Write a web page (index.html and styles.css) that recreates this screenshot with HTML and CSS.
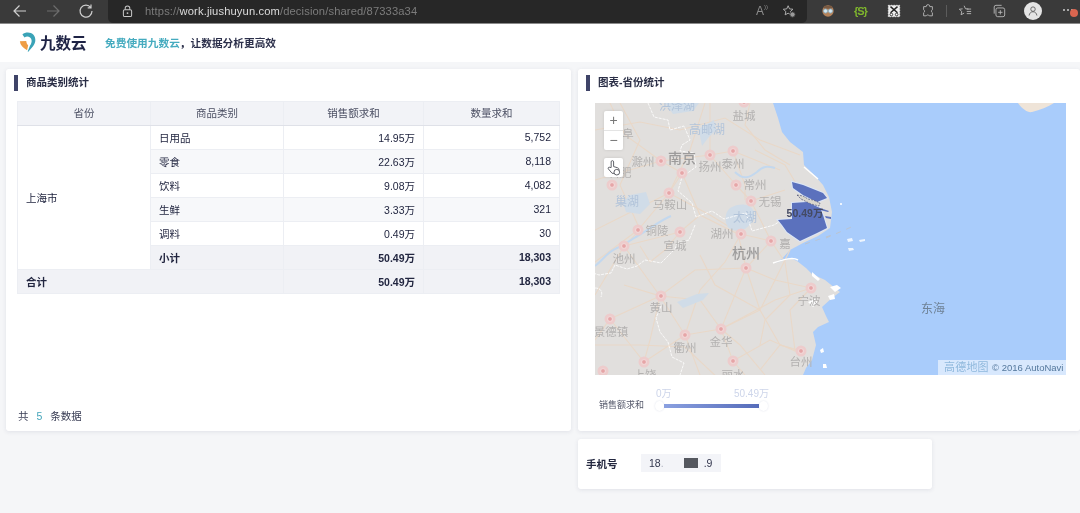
FILE: index.html
```html
<!DOCTYPE html>
<html lang="zh-CN">
<head>
<meta charset="utf-8">
<title>九数云</title>
<link rel="stylesheet" href="styles.css">
</head>
<body>
<div class="browser">
  <div class="nav-icons">
    <svg class="ic ic-back" viewBox="0 0 16 16"><path d="M14 8H2M7.500 2.500 2 8l5.500 5.500"/></svg>
    <svg class="ic ic-fwd" viewBox="0 0 16 16"><path d="M2 8h12M8.500 2.500 14 8l-5.500 5.500"/></svg>
    <svg class="ic ic-reload" viewBox="0 0 16 16"><path d="M12.800 4.500A6 6 0 1 0 14 8M13 1.500v3.300H9.700"/></svg>
  </div>
  <div class="urlbar">
    <svg class="lock" viewBox="0 0 12 14"><rect x="1.500" y="5" width="9" height="7.500" rx="1.500"/><path d="M3.500 5V3.500a2.500 2.500 0 0 1 5 0V5"/><circle class="lock-dot" cx="6" cy="8.700" r="1"/></svg>
    <span class="url"><span class="url-dim">https://</span><span class="url-host">work.jiushuyun.com</span><span class="url-dim">/decision/shared/87333a34</span></span>
    <span class="url-tools">
      <span class="read">A<sup>))</sup></span>
      <svg class="tb" viewBox="0 0 16 16"><path d="M7 2l1.600 3.600 3.900.4-2.900 2.600.8 3.800L7 10.500l-3.400 1.900.8-3.800L1.500 6l3.900-.4z"/><circle class="fill-grey" cx="12" cy="12" r="3"/></svg>
    </span>
  </div>
  <div class="ext">
    <svg class="tb tb-face" viewBox="0 0 16 16"><circle class="face" cx="8" cy="8" r="6.500"/><rect class="hair" x="3" y="2" width="10" height="3.500" rx="1.700"/><circle class="eye" cx="5.200" cy="8" r="2.300"/><circle class="eye" cx="10.800" cy="8" r="2.300"/></svg>
    <span class="ext-s">{S}</span>
    <svg class="tb tb-x" viewBox="0 0 16 16"><rect class="x-bg" x="1.500" y="1.500" width="13" height="13"/><path class="x-line" d="M4 3l8 7M12 3l-8 7"/><circle class="x-c" cx="5" cy="12" r="1.500"/><circle class="x-c" cx="11" cy="12" r="1.500"/></svg>
    <svg class="tb tb-puzzle" viewBox="0 0 16 16"><path d="M6 2.500a2 2 0 0 1 4 .5h3v3.500a2 2 0 0 0 0 3.500V13.500H9.500a2 2 0 0 0-3.500 0H3V10a2 2 0 0 0 0-3.500V3h3z"/></svg>
    <span class="sep"></span>
    <svg class="tb tb-fav" viewBox="0 0 16 16"><path d="M7 2l1.500 3.400 3.500.4M5.300 5.500 1.500 6l2.800 2.500-.8 3.800L7 10.400M10 8.500h5M10 11h5M10 5.800h5"/></svg>
    <svg class="tb tb-coll" viewBox="0 0 16 16"><rect x="4.500" y="4.500" width="10" height="10" rx="2"/><path d="M2.500 11V3.500a2 2 0 0 1 2-2H11M9.500 7v5M7 9.500h5"/></svg>
    <span class="avatar"><svg viewBox="0 0 16 16"><circle cx="8" cy="5.500" r="3"/><path d="M2.800 14c.5-3.200 2.500-5 5.200-5s4.700 1.800 5.200 5"/></svg></span>
    <span class="more"><span class="dots"><i></i><i></i><i></i></span><span class="badge"></span></span>
  </div>
</div>

<header class="site-head">
  <svg class="logo" viewBox="0 0 20 24">
    <path class="logo-t" d="M4 2.500C7.500-.5 14-.5 17 3c3.500 4.500 2.500 9.500-.5 13.500L11 23l-.8-.4 2.800-7C15.500 12 15.500 8 13 6 11 4.500 8.500 4.500 6.500 6z"/>
    <path class="logo-o" d="M1 10.500l7.500-.3c.2 2 1 3.800 2.300 5L9.500 21C4.500 18 1.500 15 1 10.500z"/>
  </svg>
  <span class="brand">九数云</span>
  <span class="slogan"><span class="slogan-a">免费使用九数云</span>，让数据分析更高效</span>
</header>

<main class="board">
  <section class="card card-table">
    <h2 class="card-title">商品类别统计</h2>
    <table class="data">
      <colgroup><col class="c1"><col class="c2"><col class="c3"><col class="c4"></colgroup>
      <thead><tr><th>省份</th><th>商品类别</th><th>销售额求和</th><th>数量求和</th></tr></thead>
      <tbody>
        <tr><td rowspan="6" class="prov">上海市</td><td>日用品</td><td class="n">14.95万</td><td class="n">5,752</td></tr>
        <tr class="alt"><td>零食</td><td class="n">22.63万</td><td class="n">8,118</td></tr>
        <tr><td>饮料</td><td class="n">9.08万</td><td class="n">4,082</td></tr>
        <tr class="alt"><td>生鲜</td><td class="n">3.33万</td><td class="n">321</td></tr>
        <tr><td>调料</td><td class="n">0.49万</td><td class="n">30</td></tr>
        <tr class="sub"><td>小计</td><td class="n">50.49万</td><td class="n">18,303</td></tr>
        <tr class="sub"><td colspan="2">合计</td><td class="n">50.49万</td><td class="n">18,303</td></tr>
      </tbody>
    </table>
    <p class="count">共<span class="count-n">5</span>条数据</p>
  </section>

  <section class="card card-map">
    <h2 class="card-title">图表-省份统计</h2>
    <div class="map">
      <svg class="map-svg" viewBox="595 103 471 272" preserveAspectRatio="none">
        <defs>
          <g id="d"><circle class="d1" r="5.500"/><circle class="d2" r="2.400"/></g>
        </defs>
        <rect class="land" x="595" y="103" width="471" height="272"/>
        <path class="sea" d="M773 103L778 118 782 132 790 142 803 152 804 165 815 176 823 185 829 197 832 212 830 228 818 236 803 243 790 250 779 262 773 264 790 258 797 261 806 268 812 274 825 280 840 292 832 298 822 307 826 316 829 322 818 327 813 332 816 345 812 360 806 368 803 375H1066V103z"/>
        <path class="sea-cap" d="M1018 103c4 6 10 10 14 9 8-2 16-5 22-9z"/>
        <g class="roads">
          <path d="M595 130L640 122 680 130 725 118 760 140 800 155"/>
          <path d="M620 103L640 140 620 185 640 230 624 246 660 296 685 335 700 375"/>
          <path d="M595 180L661 161 710 155 733 151 780 170"/>
          <path d="M682 173L700 215 738 234 746 268 721 329 733 361 745 375"/>
          <path d="M661 161L682 173 669 193 638 230 595 262"/>
          <path d="M710 103L710 155 736 185 751 201 771 241 746 268"/>
          <path d="M746 268L695 270 660 296 610 319 595 340"/>
          <path d="M746 268L775 280 811 288 790 310 795 351 801 351"/>
          <path d="M746 268L760 310 780 345 801 351"/>
          <path d="M721 329L775 300 811 288"/>
          <path d="M685 335L721 329 760 310"/>
          <path d="M610 319L644 362 685 335"/>
          <path d="M595 345L640 345 685 347 720 380"/>
          <path d="M669 193L710 215 741 234 771 241"/>
          <path d="M624 246L680 232 700 215"/>
          <path d="M733 151L745 185 745 200"/>
          <path d="M660 296L700 300 721 329 740 345 765 375"/>
          <path d="M775 280L790 250"/>
          <path d="M750 103L745 125 765 150 790 165"/>
          <path d="M610 103L625 135 661 161"/>
          <path d="M595 230L625 215 669 193 690 150 705 103"/>
          <path d="M640 246L650 262 665 250 680 232"/>
          <path d="M595 295L624 246M624 285L660 296 650 340 644 362"/>
          <path d="M700 255L715 285 760 310 775 280"/>
          <path d="M741 234L725 262 700 290 685 335"/>
          <path d="M771 241L785 262 790 295 765 320 760 345"/>
          <path d="M801 351L780 345 760 370"/>
          <path d="M733 361L770 340 795 351"/>
          <path d="M755 150L785 165 800 190M751 201L785 190"/>
        </g>
        <g class="lakes">
          <path d="M630 195l16-3 4 12-10 10-14-2-3-10z"/>
          <path d="M730 208c10-6 20-4 23 2 3 8-2 16-10 20-8 2-16 0-17-8-1-6 0-10 4-14z"/>
          <path d="M700 128l14-8 2 10-8 8-6 8-2-10z"/>
          <path d="M665 103h34l-6 8-20 3z"/>
          <path d="M677 302l20-8 12-1-6 7-20 8z"/>
          <path class="river" d="M595 266c8-6 12-14 22-18 8-3 16-10 24-14 10-6 20-14 30-18"/>
          <path class="river" d="M735 172c8 8 14 6 22 0 6-6 10-6 18-4"/>
        </g>
        <g class="borders">
          <path d="M648 103l6 14 14 3 2 10 14-4 6 14-8 5-2 6 14 2 2 14-14 10-4 14 14 12 4 14 16-6 12 8 22-6 6 18 22-6 8-5 4 8"/>
          <path d="M695 225l-6 15-12 3-2 6-14 14-16-3-8 6-10 3-12-4-4 8-12 2-6-2"/>
          <path d="M661 306l-5 12 4 14 8 10 4 15 12 6-4 12"/>
          <path d="M595 288c6 0 8 4 6 9"/>
        </g>
        <path class="shore" d="M773 263c12-4 20-6 25-3M804 167l14 12"/>
        <g class="isles">
          <path d="M830 287l7-2 4 3-6 4zM812 272l8 7-2 2-6-5zM828 296l6-2 1 5-5 1zM808 302l7-3 3 4-5 4z"/>
          <path d="M820 350l3-2 1 4-3 1zM823 364l3 0 1 4-4 0z"/>
        </g>
        <g class="isles-w">
          <path d="M847 239l5-1 1 3-5 1zM859 240l6-1 0 2-5 1zM840 203l2 0 0 2-2 0zM848 248l5 0 1 2-5 1z"/>
        </g>
        <path class="lanes" d="M805 244l30-10M826 238l30-13"/>
        <use href="#d" x="744" y="102"/><use href="#d" x="661" y="161"/><use href="#d" x="682" y="173"/>
        <use href="#d" x="710" y="155"/><use href="#d" x="733" y="151"/><use href="#d" x="736" y="185"/>
        <use href="#d" x="751" y="201"/><use href="#d" x="669" y="193"/><use href="#d" x="612" y="185"/>
        <use href="#d" x="638" y="230"/><use href="#d" x="680" y="232"/><use href="#d" x="741" y="234"/>
        <use href="#d" x="771" y="241"/><use href="#d" x="746" y="268"/><use href="#d" x="624" y="246"/>
        <use href="#d" x="811" y="288"/><use href="#d" x="661" y="296"/><use href="#d" x="610" y="319"/>
        <use href="#d" x="685" y="335"/><use href="#d" x="721" y="329"/><use href="#d" x="733" y="361"/>
        <use href="#d" x="644" y="362"/><use href="#d" x="603" y="371"/><use href="#d" x="801" y="351"/>
        <g class="city">
          <text x="744" y="120">盐城</text><text x="643" y="166">滁州</text><text x="710" y="171">扬州</text>
          <text x="733" y="168">泰州</text><text x="755" y="189">常州</text><text x="770" y="206">无锡</text>
          <text x="670" y="209">马鞍山</text><text x="657" y="235">铜陵</text><text x="722" y="238">湖州</text>
          <text x="675" y="250">宣城</text><text x="785" y="248">嘉</text><text x="624" y="263">池州</text>
          <text x="809" y="305">宁波</text><text x="661" y="312">黄山</text><text x="611" y="336">景德镇</text>
          <text x="685" y="352">衢州</text><text x="721" y="346">金华</text><text x="733" y="379">丽水</text>
          <text x="645" y="379">上饶</text><text x="801" y="366">台州</text><text x="620" y="177">合肥</text>
          <text x="628" y="138">阜</text>
        </g>
        <g class="city-big"><text x="682" y="163">南京</text><text x="746" y="258">杭州</text></g>
        <g class="water"><text x="677" y="110">洪泽湖</text><text x="707" y="134">高邮湖</text><text x="627" y="206">巢湖</text><text x="745" y="222">太湖</text></g>
        <text class="sea-name" x="933" y="313">东海</text>
        <path class="sh-outline" d="M792 182l11 3 20 8 4 5-10 4-14-7-10-7zM792 203l15-1 13 6 3 7 4 13-10 5-17 8-13-9-5-7-4-5 14-1z"/>
        <path class="sh" d="M792 182l11 3 20 8 4 5-10 4-14-7-10-7zM792 203l15-1 13 6 3 7 4 13-10 5-17 8-13-9-5-7-4-5 14-1zM820 208l9 3-1 1-8-2zM825 216l6 1 0 2-5-1z"/>
        <path class="sh-isle" d="M797 195l6 1 5 3 5 1 7 3-1 3-8-2-6-3-4-2z"/>
        <text class="val" x="805" y="217">50.49万</text>
      </svg>
      <div class="zoom"><span class="zoom-b">+</span><span class="zoom-b">−</span></div>
      <div class="hand">
        <svg viewBox="0 0 16 18"><path d="M5.500 9V3a1.300 1.300 0 0 1 2.600 0v5l4 1.200c1.300.4 1.900 1.200 1.700 2.500l-.6 3.500H6.500L2.500 10.500c-.9-1.200.7-2.500 1.800-1.500z"/><circle class="hand-c" cx="11.500" cy="14" r="3"/></svg>
      </div>
      <div class="attrib"><span class="attrib-l">高德地图</span><span class="attrib-c">© 2016 AutoNavi</span></div>
    </div>
    <div class="legend">
      <span class="legend-name">销售额求和</span>
      <div class="range">
        <div class="range-labels"><span>0万</span><span>50.49万</span></div>
        <div class="range-track"><span class="knob"></span><span class="bar"></span><span class="knob"></span></div>
      </div>
    </div>
  </section>

  <section class="card card-form">
    <span class="form-label">手机号</span>
    <span class="phone"><span>18</span><span class="ph-w">.</span><span class="ph-k"></span><span class="ph-end">.9</span></span>
  </section>
</main>
</body>
</html>
```
FILE: styles.css
```css
* { box-sizing: border-box; }
html, body { margin: 0; padding: 0; }
body {
  width: 1080px;
  height: 513px;
  overflow: hidden;
  background: #f5f6f8;
  font-family: "Liberation Sans", "Noto Sans CJK SC", sans-serif;
  font-size: 10.500px;
  color: #222640;
}
.browser, .site-head, .board { filter: blur(.3px); }

/* browser chrome */
.browser {
  height: 24px;
  background: #3a3a3a;
  border-bottom: 1px solid #8a8a8a;
  display: flex;
  align-items: stretch;
  color: #ccc;
}
.nav-icons {
  width: 108px;
  flex: none;
  display: flex;
  align-items: center;
  padding: 0 0 1px 12px;
  gap: 17px;
}
.ic { width: 16px; height: 16px; fill: none; stroke: #cfcfcf; stroke-width: 1.200; flex: none; }
.ic-fwd { stroke: #6d6d6d; }
.urlbar {
  width: 699px;
  flex: none;
  background: #272727;
  border-radius: 0 0 5px 5px;
  display: flex;
  align-items: center;
  padding: 0 0 1px 14px;
}
.lock { width: 11px; height: 13px; fill: none; stroke: #c9c9c9; stroke-width: 1.100; flex: none; }
.lock-dot { fill: #c9c9c9; stroke: none; }
.url { margin-left: 12px; font-size: 11.200px; letter-spacing: .12px; white-space: nowrap; }
.url-dim { color: #7c7c7c; }
.url-host { color: #dcdcdc; }
.url-tools { margin-left: auto; display: flex; align-items: center; gap: 14px; padding-right: 11px; }
.read { color: #8d8d8d; font-size: 12px; line-height: 14px; }
.read sup { font-size: 6px; vertical-align: 6px; line-height: 0; }
.tb { width: 14px; height: 14px; fill: none; stroke: #bdbdbd; stroke-width: 1; flex: none; }
.fill-grey { fill: #9a9a9a; stroke: #3a3a3a; }
.ext { flex: 1; display: flex; align-items: center; padding: 0 0 1px 14px; position: relative; }
.tb-face { margin-right: 19px; }
.face { fill: #b5835a; stroke: none; }
.hair { fill: #7a5a42; stroke: none; }
.eye { fill: #d8eaf2; stroke: #8fb4c8; }
.ext-s { width: 14px; color: #7fb62d; font-size: 11px; font-weight: bold; margin-right: 19px; letter-spacing: -1px; }
.tb-x { margin-right: 20px; }
.x-bg { fill: #eee; stroke: #eee; stroke-dasharray: 1.500 1.500; }
.x-line { stroke: #222; stroke-width: 1.600; }
.x-c { fill: #fff; stroke: #222; }
.tb-puzzle { margin-right: 11px; }
.sep { width: 1px; height: 12px; background: #5c5c5c; margin-right: 11px; flex: none; }
.tb-fav { margin-right: 20px; }
.tb-coll { margin-right: 18px; }
.avatar {
  width: 18px; height: 18px; border-radius: 50%;
  background: #e4e4e4; display: flex; align-items: center; justify-content: center;
  flex: none; margin-right: 21px;
}
.avatar svg { width: 12px; height: 12px; fill: none; stroke: #555; stroke-width: 1.100; }
.more { position: relative; width: 16px; height: 12px; flex: none; }
.dots { display: flex; gap: 2px; padding-top: 4px; }
.dots i { width: 2px; height: 2px; background: #ccc; border-radius: 50%; }
.badge {
  position: absolute; left: 7px; top: 4px;
  width: 8px; height: 8px; border-radius: 50%;
  background: #d9654f;
}

/* site header */
.site-head {
  height: 38px;
  background: #fff;
  display: flex;
  align-items: center;
  padding: 0 0 2px 19px;
}
.logo { width: 17px; height: 21px; flex: none; }
.logo-t { fill: #3aa3b7; }
.logo-o { fill: #ee9d45; }
.brand { margin-left: 4px; font-size: 15.500px; font-weight: bold; color: #1e2345; width: 65px; flex: none; }
.slogan { font-size: 10.700px; font-weight: bold; color: #2b2f4a; }
.slogan-a { color: #45abbf; }

/* board */
.board {
  display: grid;
  grid-template-columns: 565px 502px;
  grid-template-rows: 362px 50px;
  column-gap: 7px;
  row-gap: 8px;
  padding: 7px 0 0 6px;
}
.card {
  background: #fff;
  border-radius: 3px;
  box-shadow: 0 1px 4px rgba(40, 50, 90, .1);
}
.card-title {
  margin: 0;
  height: 16px;
  font-size: 10.500px;
  line-height: 15px;
  font-weight: bold;
  color: #2a2e46;
  border-left: 4px solid #3f4468;
  padding-left: 8px;
}
.card-table {
  padding: 6px 12px 0 8px;
  display: flex;
  flex-direction: column;
}
.card-table .data { margin: 10px 0 0 3px; }
.data {
  width: 542px;
  table-layout: fixed;
  border-collapse: collapse;
  font-size: 10.500px;
}
.c1, .c2 { width: 133px; }
.c3 { width: 140px; }
.c4 { width: 136px; }
.data th, .data td {
  height: 24px;
  padding: 0 8px 1px;
  border: 1px solid #eceef3;
  white-space: nowrap;
}
.data th {
  background: #f2f3f7;
  font-weight: normal;
  color: #4b4f63;
  border-bottom: 1px solid #dfe1e8;
  padding-bottom: 2px;
}
.n { text-align: right; }
.alt td { background: #f7f8fa; }
.sub td { background: #f1f2f6; font-weight: bold; }
.prov { background: #fff; }
.count {
  margin: auto 0 7px 4px;
  color: #3a3e55;
  line-height: 16px;
  height: 16px;
}
.count-n { color: #45a5ba; margin: 0 8px; }

/* map card */
.card-map { padding: 6px 14px 0 8px; }
.map {
  position: relative;
  width: 471px;
  height: 272px;
  margin: 12px 0 0 9px;
  overflow: hidden;
}
.map-svg { display: block; width: 471px; height: 272px; filter: blur(.3px); }
.land { fill: #e1dfdd; }
.sea { fill: #a9ccfb; }
.sea-cap { fill: #efe4d8; }
.roads path { fill: none; stroke: #e9d8c8; stroke-width: 1.100; }
.lakes path { fill: #d0dce8; }
.lakes path.river { fill: none; stroke: #c3d8ee; stroke-width: 2; }
.borders path { fill: none; stroke: #fff; stroke-width: .8; stroke-dasharray: 3 1; }
.shore { fill: none; stroke: #fff; stroke-width: 1.500; }
.isles path { fill: #fff; }
.isles-w path { fill: #fff; opacity: .8; }
.lanes { fill: none; stroke: #bcc4cf; stroke-width: 1; stroke-dasharray: 5 6; }
.d1 { fill: #edcccc; }
.d2 { fill: #e6a5a7; stroke: #f5e3e3; stroke-width: .8; }
.city text { font-size: 11.500px; fill: #b3b1b0; text-anchor: middle; }
.city-big text { font-size: 14px; fill: #9c9b9b; text-anchor: middle; font-weight: 500; }
.water text { font-size: 12px; fill: #b2c4da; text-anchor: middle; }
.sea-name { font-size: 12px; fill: #6f8296; text-anchor: middle; }
.sh { fill: #5b71bd; }
.sh-outline { fill: none; stroke: #dbe6f7; stroke-width: 2; }
.sh-isle { fill: #d9d6cc; stroke: #39406a; stroke-width: .6; stroke-dasharray: 2 1; }
.val { font-size: 10.500px; fill: #444a63; font-weight: bold; text-anchor: middle; }
.zoom {
  position: absolute; left: 9px; top: 8px;
  width: 19px; height: 39px;
  background: #fff; border-radius: 2px;
  display: flex; flex-direction: column;
  box-shadow: 0 0 3px rgba(0, 0, 0, .12);
}
.zoom-b {
  height: 20px; text-align: center; line-height: 19px;
  color: #777; font-size: 14px;
}
.zoom-b:first-child { border-bottom: 1px solid #e4e4e4; }
.hand {
  position: absolute; left: 9px; top: 55px;
  width: 19px; height: 19px;
  background: #fff; border-radius: 2px;
  box-shadow: 0 0 3px rgba(0, 0, 0, .12);
  display: flex; align-items: center; justify-content: center;
}
.hand svg { width: 15px; height: 17px; fill: #fff; stroke: #55585f; stroke-width: 1; }
.hand-c { fill: #fff; }
.attrib {
  position: absolute; right: 0; bottom: 0;
  width: 128px; height: 15px;
  background: rgba(255, 255, 255, .55);
  display: flex; align-items: center; padding-left: 6px; gap: 3px;
  white-space: nowrap;
}
.attrib-l { font-size: 11px; letter-spacing: .2px; color: #8fb8dc; line-height: 13px; width: 45px; flex: none; }
.attrib-c { font-size: 9.500px; color: #54789c; }

/* legend */
.legend { display: flex; align-items: flex-start; margin: 13px 0 0 13px; }
.legend-name { font-size: 9px; color: #55596b; margin-top: 10px; width: 56px; flex: none; white-space: nowrap; }
.range { width: 114px; }
.range-labels {
  display: flex; justify-content: space-between;
  font-size: 10px; line-height: 12px; color: #cdd5ea; padding: 0 0 0 1px;
}
.range-track { display: flex; align-items: center; margin-top: 1px; }
.knob {
  width: 9px; height: 10px; border-radius: 50%; background: #fff;
  box-shadow: 0 0 2px rgba(60, 80, 140, .18); flex: none;
}
.bar {
  width: 95px; height: 4px; flex: none;
  background: linear-gradient(90deg, #8aa0e0, #566cba);
}

/* form */
.card-form {
  grid-column: 2;
  width: 354px;
  display: flex;
  align-items: center;
  padding: 0 0 2px 8px;
}
.form-label { font-weight: bold; font-size: 10.500px; color: #23273f; width: 55px; flex: none; }
.phone {
  width: 80px; height: 18px;
  background: #f3f4f8;
  display: flex; align-items: center;
  padding-left: 8px;
  font-size: 10.500px;
  color: #32364d;
}
.ph-w { width: 23px; color: #aeb2c0; }
.ph-k { width: 14px; height: 10px; background: #55585f; flex: none; }
.ph-end { margin-left: 6px; }
```
